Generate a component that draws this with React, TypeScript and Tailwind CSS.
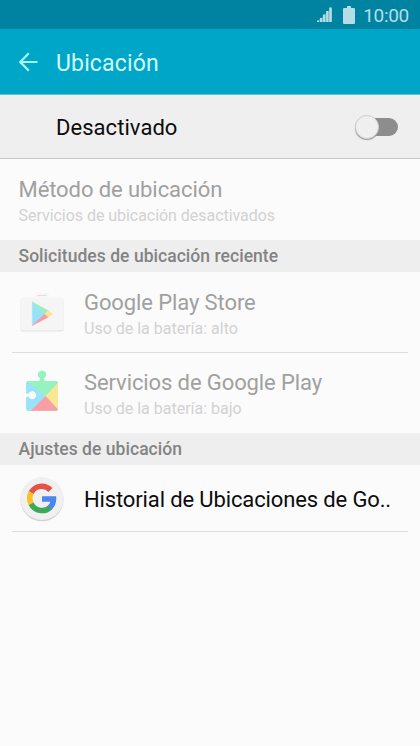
import type { ReactNode } from 'react';

interface AppRow {
  id: number;
  name: string;
  usage: string;
  icon: ReactNode;
}

const SignalIcon = () => (
  <svg width="17" height="17" viewBox="0 0 17 17" fill="#b5dde6">
    <path d="M1 16v-1.500h2V16zM3.900 16v-4h2.400v4zM7 16V8.500h2.400V16zM10.100 16V5h2.400v11zM13.200 16V1.500h2.600V16z" />
    <path d="M1 16 15.800 1.500V16z" opacity="0.300" />
  </svg>
);

const BatteryIcon = () => (
  <svg width="12" height="18" viewBox="0 0 12 18" fill="#b5dde6">
    <path d="M4 0h4v2h3a1 1 0 0 1 1 1v14a1 1 0 0 1-1 1H1a1 1 0 0 1-1-1V3a1 1 0 0 1 1-1h3z" />
  </svg>
);

const BackIcon = () => (
  <svg width="20" height="20" viewBox="0 0 20 20" fill="none" stroke="#a5fbfb" strokeWidth="2.200">
    <path d="M10.8 1.3 2.300 10l8.5 8.7M2.300 10h17.200" />
  </svg>
);

const PlayStoreIcon = () => (
  <svg width="48" height="48" viewBox="0 0 48 48">
    <path d="M17 11.500 18.500 6h13l1.500 5.500" fill="#f7f7f7" />
    <path d="M20.500 8.500h9" stroke="#e0e0e0" strokeWidth="1" />
    <rect x="3.300" y="11" width="43.400" height="33.500" rx="2.500" fill="#e2e2e2" />
    <rect x="3.300" y="10.500" width="43.400" height="33" rx="2.500" fill="#f5f5f5" />
    <g strokeLinejoin="round" strokeWidth="0.500">
      <path d="M15.300 15v23.500L27.500 27z" fill="#96e2fa" stroke="#96e2fa" />
      <path d="M15.300 15 31.500 23.800 27.800 27.200z" fill="#96efc0" stroke="#96efc0" />
      <path d="M15.300 38.500 31.500 30 27.800 26.800z" fill="#f59aa2" stroke="#f59aa2" />
      <path d="M31.300 23.800 35.800 27l-4.500 3L27.800 27z" fill="#fde492" stroke="#fde492" />
    </g>
  </svg>
);

const PlayServicesIcon = () => (
  <svg width="48" height="48" viewBox="0 0 48 48">
    <clipPath id="puzzle">
      <path d="M11 15h11q1-.5 1-2.700a4.200 4.200 0 1 1 4 0q0 2.200 1 2.700H39.300a1.700 1.700 0 0 1 1.700 1.700V43a1.700 1.700 0 0 1-1.700 1.700H11A1.700 1.700 0 0 1 9.300 43V31.500q.5-1 2.200-.6a4.100 4.100 0 1 0 0-3.400q-1.700.5-2.200-.5V16.700A1.700 1.700 0 0 1 11 15z" />
    </clipPath>
    <g clipPath="url(#puzzle)">
      <rect width="48" height="48" fill="#96f2bf" />
      <path d="M9 15 28.500 30 13 45.500H9z" fill="#99e2fc" />
      <path d="M28.500 30 42 16v28z" fill="#fde792" />
      <path d="M28.500 30 12.500 46H43z" fill="#f99da6" />
    </g>
  </svg>
);

const GoogleIcon = () => (
  <svg width="48" height="48" viewBox="0 0 48 48">
    <circle cx="24" cy="25.800" r="21.500" fill="#d2d2d2" />
    <circle cx="24" cy="24.500" r="21.500" fill="#f0f0f0" />
    <g fill="none" strokeWidth="5.500">
      <path d="M13.150 18.600a12 12 0 0 1 19.300-2.600" stroke="#e65245" />
      <path d="M13.150 29.800a12 12 0 0 1 0-11.200" stroke="#fbc02a" />
      <path d="M32.300 33.200a12 12 0 0 1-19.150-3.400" stroke="#3da858" />
      <path d="M24 25h11.500a12 12 0 0 1-3.800 8.700" stroke="#4a87ee" />
    </g>
  </svg>
);

const apps: AppRow[] = [
  { id: 1, name: 'Google Play Store', usage: 'Uso de la batería: alto', icon: <PlayStoreIcon /> },
  { id: 2, name: 'Servicios de Google Play', usage: 'Uso de la batería: bajo', icon: <PlayServicesIcon /> },
];

const SectionHeader = ({ title }: { title: string }) => (
  <h2 className="flex h-8 items-center bg-[#eeeeee] pl-[18.500px] text-[17.500px] font-medium tracking-[0.040px] text-[#838383]">
    {title}
  </h2>
);

const App = () => {
  return (
    <div className="flex h-[746px] w-[420px] flex-col overflow-hidden whitespace-nowrap bg-[#fbfbfb] font-[Roboto,sans-serif]">
      {/* Status bar */}
      <div className="flex h-[29px] shrink-0 items-center justify-end bg-[#0083a0] pr-[11px] text-[#b5dde6]">
        <SignalIcon />
        <div className="ml-[10px] mr-2">
          <BatteryIcon />
        </div>
        <span className="pt-0.5 text-[19px] leading-6 tracking-[-0.3px]">10:00</span>
      </div>

      {/* Title bar */}
      <header className="flex h-[66px] shrink-0 items-center border-b border-[#62bfd0] bg-[#00a6c7] pl-[18px]">
        <BackIcon />
        <h1 className="ml-[18px] pt-[5px] text-[23px] tracking-[0.150px] text-[#d2fbff]">Ubicación</h1>
      </header>

      {/* Main switch */}
      <div className="flex h-16 shrink-0 items-center justify-between border-b border-[#c6c6c6] bg-[#efefef] pl-14 pr-[22px]">
        <span className="pt-0.5 text-[22px] tracking-[0.050px] text-[#0c0c0c]">Desactivado</span>
        <div className="flex h-[18px] w-[43px] items-center rounded-full bg-linear-to-r from-transparent from-30% to-[#8d8d8d] to-30%">
          <div className="size-6 shrink-0 rounded-full border border-[#cfcfcf] bg-[#efefef] shadow-[0_1px_1px_#999]"></div>
        </div>
      </div>

      <div className="flex h-[81px] shrink-0 flex-col pl-[18.500px] pt-4">
        <div className="text-[22px] leading-[30px] tracking-[-0.080px] text-[#a0a0a0]">Método de ubicación</div>
        <div className="text-[16px] leading-[22px] tracking-[-0.040px] text-[#d2d2d2]">Servicios de ubicación desactivados</div>
      </div>

      <SectionHeader title="Solicitudes de ubicación reciente" />
      {apps.map((app, index) => (
        <div key={app.id} className="px-3">
          <div className={`flex pl-[5px] ${index === 0 ? 'h-[81px] border-b border-[#dddddd]' : 'h-20'}`}>
            <div className={`w-[67px] ${index === 0 ? 'mt-[15px]' : 'mt-[13px]'}`}>{app.icon}</div>
            <div className={index === 0 ? 'pt-4' : 'pt-[15px]'}>
              <div className="text-[22px] leading-[30px] tracking-[-0.100px] text-[#a0a0a0]">{app.name}</div>
              <div className="text-[16px] leading-[22px] text-[#d2d2d2]">{app.usage}</div>
            </div>
          </div>
        </div>
      ))}

      <SectionHeader title="Ajustes de ubicación" />
      <div className="px-3">
        <div className="flex h-[67px] items-center border-b border-[#dddddd] pl-1.5">
          <div className="w-[66px]">
            <GoogleIcon />
          </div>
          <span className="pt-0.5 text-[22px] tracking-[-0.130px] text-[#0c0c0c]">Historial de Ubicaciones de Go..</span>
        </div>
      </div>
    </div>
  );
};

export default App;
